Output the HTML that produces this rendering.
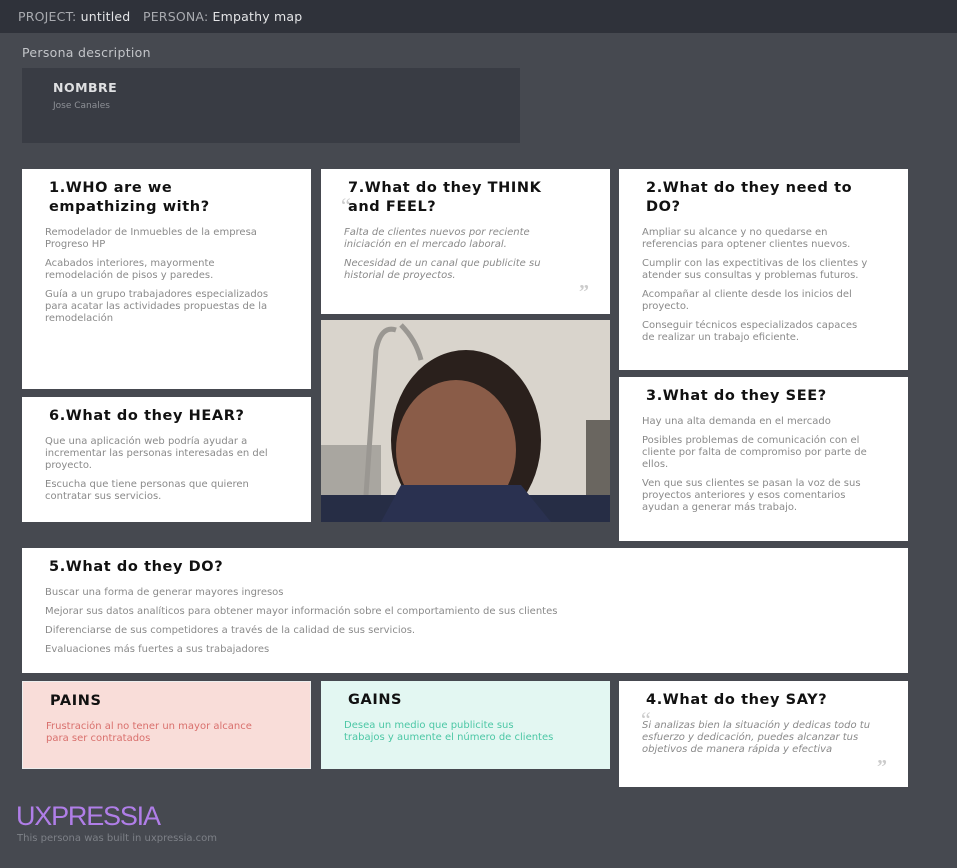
<!DOCTYPE html>
<html><head><meta charset="utf-8"><style>
*{margin:0;padding:0;box-sizing:border-box}
body{width:957px;height:868px;background:#464950;font-family:"DejaVu Sans","Liberation Sans",sans-serif;position:relative;overflow:hidden}
.top{position:absolute;left:0;top:0;width:957px;height:33px;background:#2f323a;color:#a9abb0;font-size:12.5px;padding:9px 18px;letter-spacing:0.2px}
.top b{font-weight:normal;color:#e4e5e7}
.pd{position:absolute;left:22px;top:45px;color:#c3c5c9;font-size:12.5px;letter-spacing:0.3px}
.nb{position:absolute;left:22px;top:68px;width:498px;height:75px;background:#393c44}
.nb h4{position:absolute;left:31px;top:12px;color:#dfe0e2;font-size:12.5px;letter-spacing:0.5px}
.nb p{position:absolute;left:31px;top:33px;color:#8d9096;font-size:9px}
.c{position:absolute;background:#fff;padding:10px 40px 0 23px}
.c h3{font-size:14.5px;color:#111;letter-spacing:0.6px;line-height:19px;margin-left:4px;margin-bottom:10px}
.c p{font-size:10px;color:#8a8a8a;line-height:12px;margin-bottom:7px;letter-spacing:0}
.c.i p{font-style:italic}
.q1{position:absolute;color:#ccc;font-size:22px;font-family:"Liberation Serif",serif}
.q2{position:absolute;color:#ccc;font-size:20px;font-weight:bold;font-family:"Liberation Serif",serif}
</style></head><body>
<div class="top">PROJECT: <b>untitled</b> &nbsp; PERSONA: <b>Empathy map</b></div>
<div class="pd">Persona description</div>
<div class="nb"><h4>NOMBRE</h4><p>Jose Canales</p></div>

<div class="c" style="left:22px;top:169px;width:289px;height:220px"><h3>1.WHO are we<br>empathizing with?</h3>
<p>Remodelador de Inmuebles de la empresa Progreso HP</p><p>Acabados interiores, mayormente remodelación de pisos y paredes.</p><p>Guía a un grupo trabajadores especializados para acatar las actividades propuestas de la remodelación</p></div>

<div class="c i" style="left:321px;top:169px;width:289px;height:145px"><h3>7.What do they THINK<br>and FEEL?</h3>
<span class="q1" style="left:20px;top:24px">“</span>
<p>Falta de clientes nuevos por reciente iniciación en el mercado laboral.</p><p>Necesidad de un canal que publicite su historial de proyectos.</p>
<span class="q2" style="left:258px;top:112px">”</span></div>

<svg style="position:absolute;left:321px;top:320px" width="289" height="202" viewBox="0 0 289 202">
<rect width="289" height="202" fill="#d9d4cc"/>
<rect x="0" y="125" width="60" height="50" fill="#a9a6a0"/>
<path d="M45 175 L55 30 Q60 5 75 10" stroke="#9a9792" stroke-width="5" fill="none"/>
<path d="M80 5 Q95 20 100 40" stroke="#9a9792" stroke-width="5" fill="none"/>
<rect x="265" y="100" width="24" height="102" fill="#6a6660"/>
<ellipse cx="145" cy="120" rx="75" ry="90" fill="#2a201c"/>
<ellipse cx="135" cy="130" rx="60" ry="70" fill="#8a5c48"/>
<rect x="0" y="175" width="289" height="27" fill="#262d45"/>
<path d="M60 202 L80 165 L200 165 L230 202Z" fill="#2a3150"/>
</svg>

<div class="c" style="left:619px;top:169px;width:289px;height:201px"><h3>2.What do they need to<br>DO?</h3>
<p>Ampliar su alcance y no quedarse en referencias para optener clientes nuevos.</p><p>Cumplir con las expectitivas de los clientes y atender sus consultas y problemas futuros.</p><p>Acompañar al cliente desde los inicios del proyecto.</p><p>Conseguir técnicos especializados capaces de realizar un trabajo eficiente.</p></div>

<div class="c" style="left:22px;top:397px;width:289px;height:125px"><h3>6.What do they HEAR?</h3>
<p>Que una aplicación web podría ayudar a incrementar las personas interesadas en del proyecto.</p><p>Escucha que tiene personas que quieren contratar sus servicios.</p></div>

<div class="c" style="left:619px;top:377px;width:289px;height:164px"><h3>3.What do they SEE?</h3>
<p>Hay una alta demanda en el mercado</p><p>Posibles problemas de comunicación con el cliente por falta de compromiso por parte de ellos.</p><p>Ven que sus clientes se pasan la voz de sus proyectos anteriores y esos comentarios ayudan a generar más trabajo.</p></div>

<div class="c" style="left:22px;top:548px;width:886px;height:125px"><h3>5.What do they DO?</h3>
<p>Buscar una forma de generar mayores ingresos</p><p>Mejorar sus datos analíticos para obtener mayor información sobre el comportamiento de sus clientes</p><p>Diferenciarse de sus competidores a través de la calidad de sus servicios.</p><p>Evaluaciones más fuertes a sus trabajadores</p></div>

<div class="c" style="left:22px;top:681px;width:289px;height:88px;background:#f9ddd9;border:1px solid #eee"><h3>PAINS</h3>
<p style="color:#d9706d">Frustración al no tener un mayor alcance para ser contratados</p></div>

<div class="c" style="left:321px;top:681px;width:289px;height:88px;background:#e3f7f2;padding-right:40px"><h3>GAINS</h3>
<p style="color:#4cc7a5">Desea un medio que publicite sus<br>trabajos y aumente el número de clientes</p></div>

<div class="c i" style="left:619px;top:681px;width:289px;height:106px;padding-right:22px"><h3>4.What do they SAY?</h3>
<span class="q1" style="left:22px;top:26px">“</span>
<p style="margin-top:8px">Si analizas bien la situación y dedicas todo tu esfuerzo y dedicación, puedes alcanzar tus objetivos de manera rápida y efectiva</p>
<span class="q2" style="left:258px;top:75px">”</span></div>

<div style="position:absolute;left:16px;top:801px;color:#b07ee8;font-size:27px;letter-spacing:-1.2px;font-family:'Liberation Sans',sans-serif">UXPRESSIA</div>
<div style="position:absolute;left:17px;top:833px;color:#7d8087;font-size:10px">This persona was built in uxpressia.com</div>
</body></html>
